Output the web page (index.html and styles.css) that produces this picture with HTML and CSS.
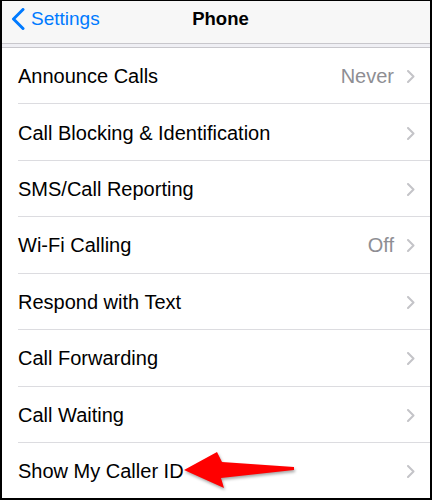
FILE: index.html
```html
<!DOCTYPE html>
<html>
<head>
<meta charset="utf-8">
<link rel="stylesheet" href="styles.css">
</head>
<body>
<div class="screen">
  <header class="nav">
    <div class="back">
      <svg class="back-icon" viewBox="0 0 14 22" width="14" height="22"><path d="M12 1.5 L2.5 11 L12 20.5"/></svg>
      <span class="back-label">Settings</span>
    </div>
    <div class="title">Phone</div>
    <div></div>
  </header>
  <div class="band"></div>
  <ul class="list">
    <li class="row"><span class="label">Announce Calls</span><span class="value">Never</span><svg class="chev" viewBox="0 0 8 13" width="8" height="13"><path d="M1 1 L6.5 6.5 L1 12"/></svg></li>
    <li class="row"><span class="label">Call Blocking &amp; Identification</span><svg class="chev" viewBox="0 0 8 13" width="8" height="13"><path d="M1 1 L6.5 6.5 L1 12"/></svg></li>
    <li class="row"><span class="label">SMS/Call Reporting</span><svg class="chev" viewBox="0 0 8 13" width="8" height="13"><path d="M1 1 L6.5 6.5 L1 12"/></svg></li>
    <li class="row"><span class="label">Wi-Fi Calling</span><span class="value">Off</span><svg class="chev" viewBox="0 0 8 13" width="8" height="13"><path d="M1 1 L6.5 6.5 L1 12"/></svg></li>
    <li class="row"><span class="label">Respond with Text</span><svg class="chev" viewBox="0 0 8 13" width="8" height="13"><path d="M1 1 L6.5 6.5 L1 12"/></svg></li>
    <li class="row"><span class="label">Call Forwarding</span><svg class="chev" viewBox="0 0 8 13" width="8" height="13"><path d="M1 1 L6.5 6.5 L1 12"/></svg></li>
    <li class="row"><span class="label">Call Waiting</span><svg class="chev" viewBox="0 0 8 13" width="8" height="13"><path d="M1 1 L6.5 6.5 L1 12"/></svg></li>
    <li class="row last"><span class="label">Show My Caller ID</span><svg class="chev" viewBox="0 0 8 13" width="8" height="13"><path d="M1 1 L6.5 6.5 L1 12"/></svg></li>
  </ul>
  <svg class="arrow" viewBox="0 0 116 42" width="116" height="42"><polygon points="2,20 35,2 40,12 112,17 112,20 39,28 42,38"/></svg>
</div>
</body>
</html>
```

FILE: styles.css
```css
html, body {
  margin: 0;
  padding: 0;
  background: #fff;
}
.screen {
  position: relative;
  width: 432px;
  height: 500px;
  box-sizing: border-box;
  border: 2px solid #000;
  border-top-width: 1px;
  background: #fff;
  overflow: hidden;
  font-family: "Liberation Sans", Arial, sans-serif;
}
.nav {
  display: grid;
  grid-template-columns: 1fr auto 1fr;
  align-items: center;
  height: 43px;
  box-sizing: border-box;
  padding: 0 0 6px 9px;
  background: #f7f7f7;
  border-bottom: 1px solid #c8c7cc;
}
.back {
  display: flex;
  align-items: center;
  gap: 6px;
  color: #007aff;
}
.back-icon {
  display: block;
  fill: none;
  stroke: #007aff;
  stroke-width: 3;
  stroke-linecap: round;
  stroke-linejoin: round;
}
.back-label {
  font-size: 19px;
  line-height: 22px;
}
.title {
  font-size: 18.5px;
  font-weight: bold;
  color: #000;
  line-height: 22px;
}
.band {
  height: 3px;
  background: #efeff4;
  border-bottom: 1px solid #c8c7cc;
}
.list {
  list-style: none;
  margin: 0;
  padding: 0;
}
.row {
  display: flex;
  align-items: center;
  height: 55.43px;
  box-sizing: content-box;
  margin-left: 16px;
  padding-right: 15px;
  border-bottom: 1px solid #dcdce0;
  font-size: 20px;
  color: #000;
}
.row.last {
  border-bottom: none;
}
.label {
  flex: 1;
  white-space: nowrap;
  padding-top: 2px;
}
.value {
  color: #8e8e93;
  margin-right: 13px;
  padding-top: 2px;
}
.chev {
  display: block;
  fill: none;
  stroke: #c4c4c8;
  stroke-width: 2;
  stroke-linecap: round;
  stroke-linejoin: round;
  margin-top: 2px;
}
.arrow {
  position: absolute;
  left: 180px;
  top: 449px;
  fill: #ff0000;
  filter: drop-shadow(1px 2px 1.5px rgba(0,0,0,0.35));
}
```
